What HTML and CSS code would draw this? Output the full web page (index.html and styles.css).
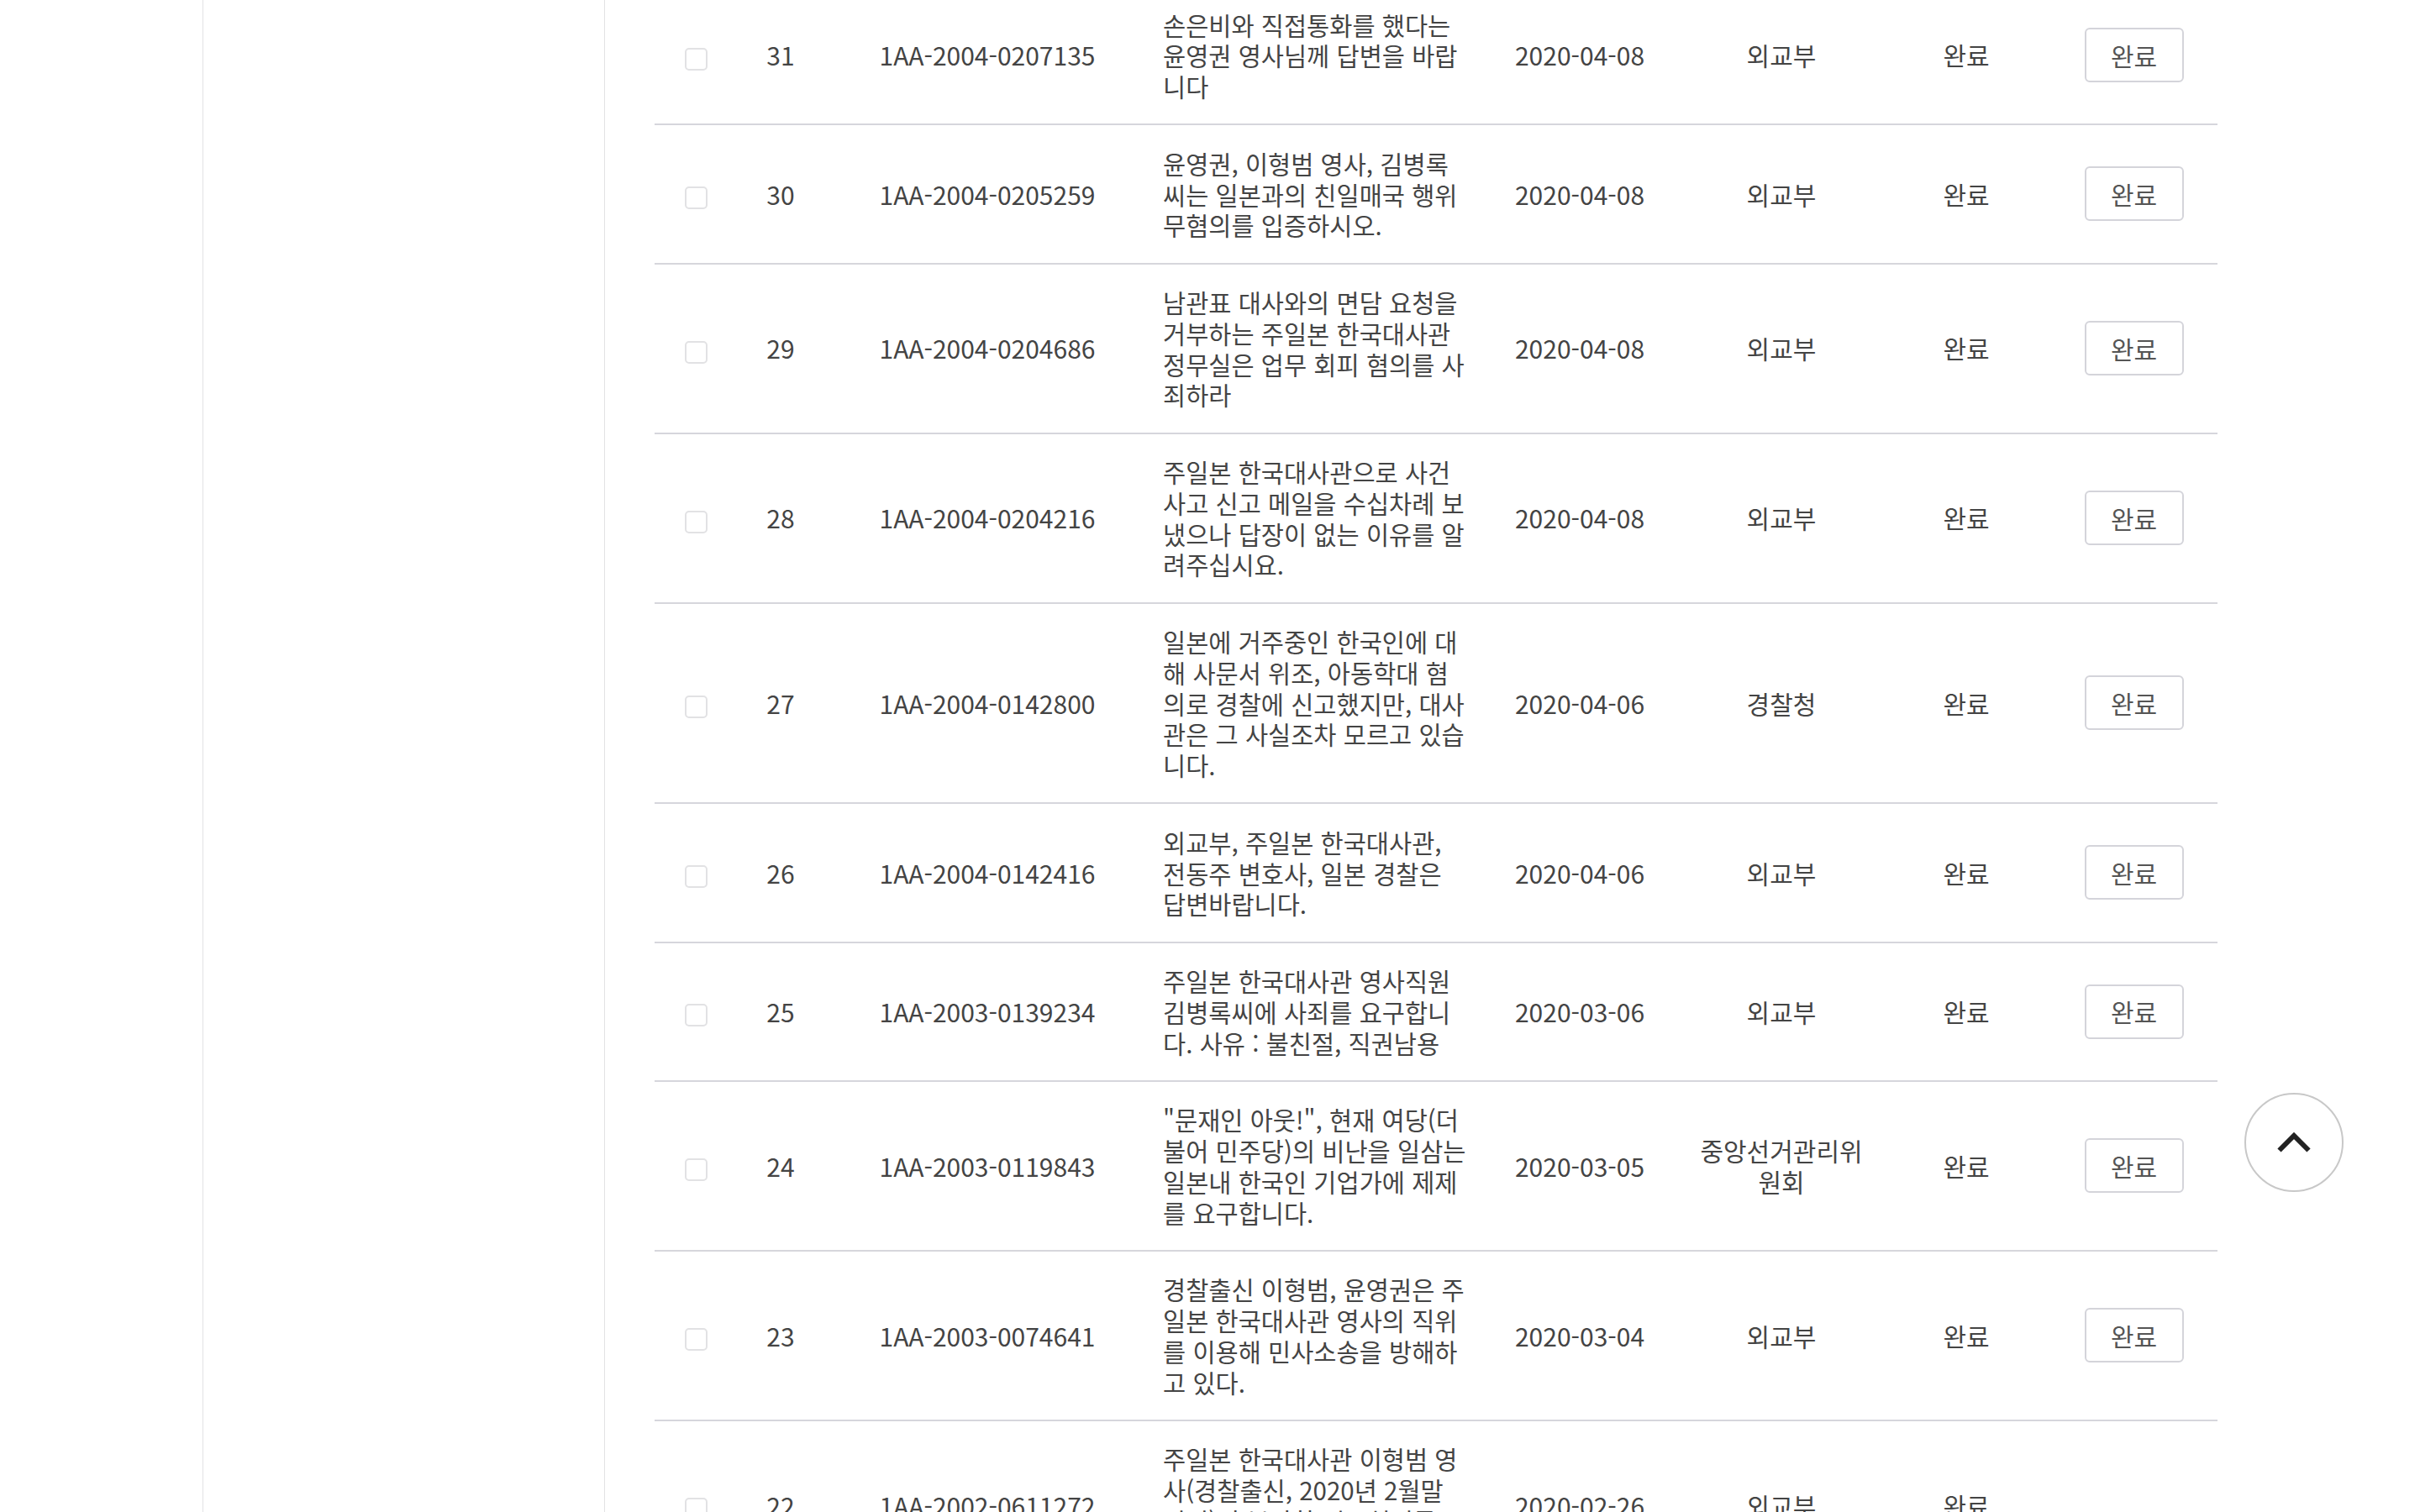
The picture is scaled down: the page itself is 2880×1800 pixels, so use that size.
FILE: index.html
```html
<!DOCTYPE html>
<html lang="ko">
<head>
<meta charset="utf-8">
<title>민원 목록</title>
<link rel="stylesheet" href="styles.css">
</head>
<body>
<div class="page">
  <div class="gutter"></div>
  <aside class="sidebar"></aside>
  <main class="main">
    <table class="list">
      <colgroup>
        <col class="c-chk"><col class="c-no"><col class="c-id"><col class="c-title"><col class="c-date"><col class="c-org"><col class="c-state"><col class="c-btn">
      </colgroup>
      <tbody>
        <tr>
          <td><input type="checkbox" class="chk"></td>
          <td>31</td>
          <td>1AA-2004-0207135</td>
          <td class="title">손은비와 직접통화를 했다는<br>윤영권 영사님께 답변을 바랍<br>니다</td>
          <td>2020-04-08</td>
          <td>외교부</td>
          <td>완료</td>
          <td><button class="btn">완료</button></td>
        </tr>
        <tr>
          <td><input type="checkbox" class="chk"></td>
          <td>30</td>
          <td>1AA-2004-0205259</td>
          <td class="title">윤영권, 이형범 영사, 김병록<br>씨는 일본과의 친일매국 행위<br>무혐의를 입증하시오.</td>
          <td>2020-04-08</td>
          <td>외교부</td>
          <td>완료</td>
          <td><button class="btn">완료</button></td>
        </tr>
        <tr>
          <td><input type="checkbox" class="chk"></td>
          <td>29</td>
          <td>1AA-2004-0204686</td>
          <td class="title">남관표 대사와의 면담 요청을<br>거부하는 주일본 한국대사관<br>정무실은 업무 회피 혐의를 사<br>죄하라</td>
          <td>2020-04-08</td>
          <td>외교부</td>
          <td>완료</td>
          <td><button class="btn">완료</button></td>
        </tr>
        <tr>
          <td><input type="checkbox" class="chk"></td>
          <td>28</td>
          <td>1AA-2004-0204216</td>
          <td class="title">주일본 한국대사관으로 사건<br>사고 신고 메일을 수십차례 보<br>냈으나 답장이 없는 이유를 알<br>려주십시요.</td>
          <td>2020-04-08</td>
          <td>외교부</td>
          <td>완료</td>
          <td><button class="btn">완료</button></td>
        </tr>
        <tr>
          <td><input type="checkbox" class="chk"></td>
          <td>27</td>
          <td>1AA-2004-0142800</td>
          <td class="title">일본에 거주중인 한국인에 대<br>해 사문서 위조, 아동학대 혐<br>의로 경찰에 신고했지만, 대사<br>관은 그 사실조차 모르고 있습<br>니다.</td>
          <td>2020-04-06</td>
          <td>경찰청</td>
          <td>완료</td>
          <td><button class="btn">완료</button></td>
        </tr>
        <tr>
          <td><input type="checkbox" class="chk"></td>
          <td>26</td>
          <td>1AA-2004-0142416</td>
          <td class="title">외교부, 주일본 한국대사관,<br>전동주 변호사, 일본 경찰은<br>답변바랍니다.</td>
          <td>2020-04-06</td>
          <td>외교부</td>
          <td>완료</td>
          <td><button class="btn">완료</button></td>
        </tr>
        <tr>
          <td><input type="checkbox" class="chk"></td>
          <td>25</td>
          <td>1AA-2003-0139234</td>
          <td class="title">주일본 한국대사관 영사직원<br>김병록씨에 사죄를 요구합니<br>다. 사유 : 불친절, 직권남용</td>
          <td>2020-03-06</td>
          <td>외교부</td>
          <td>완료</td>
          <td><button class="btn">완료</button></td>
        </tr>
        <tr>
          <td><input type="checkbox" class="chk"></td>
          <td>24</td>
          <td>1AA-2003-0119843</td>
          <td class="title">"문재인 아웃!", 현재 여당(더<br>불어 민주당)의 비난을 일삼는<br>일본내 한국인 기업가에 제제<br>를 요구합니다.</td>
          <td>2020-03-05</td>
          <td>중앙선거관리위<br>원회</td>
          <td>완료</td>
          <td><button class="btn">완료</button></td>
        </tr>
        <tr>
          <td><input type="checkbox" class="chk"></td>
          <td>23</td>
          <td>1AA-2003-0074641</td>
          <td class="title">경찰출신 이형범, 윤영권은 주<br>일본 한국대사관 영사의 직위<br>를 이용해 민사소송을 방해하<br>고 있다.</td>
          <td>2020-03-04</td>
          <td>외교부</td>
          <td>완료</td>
          <td><button class="btn">완료</button></td>
        </tr>
        <tr>
          <td><input type="checkbox" class="chk"></td>
          <td>22</td>
          <td>1AA-2002-0611272</td>
          <td class="title">주일본 한국대사관 이형범 영<br>사(경찰출신, 2020년 2월말<br>퇴임)의 부당한 업무처리를 고<br>발합니다.</td>
          <td>2020-02-26</td>
          <td>외교부</td>
          <td>완료</td>
          <td></td>
        </tr>
      </tbody>
    </table>
  </main>
</div>
<a class="to-top" href="#" aria-label="맨 위로">
  <svg width="40" height="24" viewBox="0 0 40 24"><path d="M2.5 21.5 L20 4 L37.5 21.5" fill="none" stroke="#222" stroke-width="6"/></svg>
</a>
</body>
</html>
```
FILE: styles.css
```css
html, body {
  margin: 0;
  padding: 0;
  background: #fff;
  overflow: hidden;
}
body {
  font-family: "Noto Sans CJK KR", "Noto Sans", sans-serif;
  font-size: 30px;
  color: #444;
}
.page {
  display: flex;
  min-height: 100vh;
  align-items: stretch;
}
.gutter {
  width: 241px;
  flex: none;
}
.sidebar {
  width: 479px;
  flex: none;
  box-sizing: border-box;
  border-left: 1px solid #e2e2e4;
  border-right: 1px solid #e2e2e4;
}
.main {
  padding-left: 59px;
  flex: none;
}
.list {
  width: 1860px;
  margin-top: -16px;
  border-collapse: separate;
  border-spacing: 0;
  table-layout: fixed;
}
.c-chk { width: 98px; }
.c-no { width: 104px; }
.c-id { width: 388px; }
.c-title { width: 391px; }
.c-date { width: 240px; }
.c-org { width: 240px; }
.c-state { width: 200px; }
.c-btn { width: 199px; }
.list td {
  padding: 26.6px 0;
  line-height: 36.7px;
  text-align: center;
  vertical-align: middle;
  border-bottom: 2px solid #d6d6dc;
  white-space: nowrap;
}
.list td.title {
  text-align: left;
  font-size: 29.5px;
  padding-left: 15px;
  padding-right: 0;
}
.chk {
  appearance: none;
  -webkit-appearance: none;
  width: 27px;
  height: 27px;
  margin: 0;
  border: 2px solid #e2e2e4;
  border-radius: 5px;
  background: #fff;
  vertical-align: middle;
}
.btn {
  width: 118px;
  height: 65px;
  box-sizing: border-box;
  border: 2px solid #d4d4da;
  border-radius: 6px;
  background: #fff;
  font-family: inherit;
  font-size: 30px;
  line-height: 1;
  color: #555;
  padding: 0;
  vertical-align: middle;
}
.to-top {
  position: fixed;
  right: 91px;
  bottom: 381px;
  width: 118px;
  height: 118px;
  box-sizing: border-box;
  border: 2px solid #c8c8c8;
  border-radius: 50%;
  background: #fff;
  display: flex;
  align-items: center;
  justify-content: center;
}
```
